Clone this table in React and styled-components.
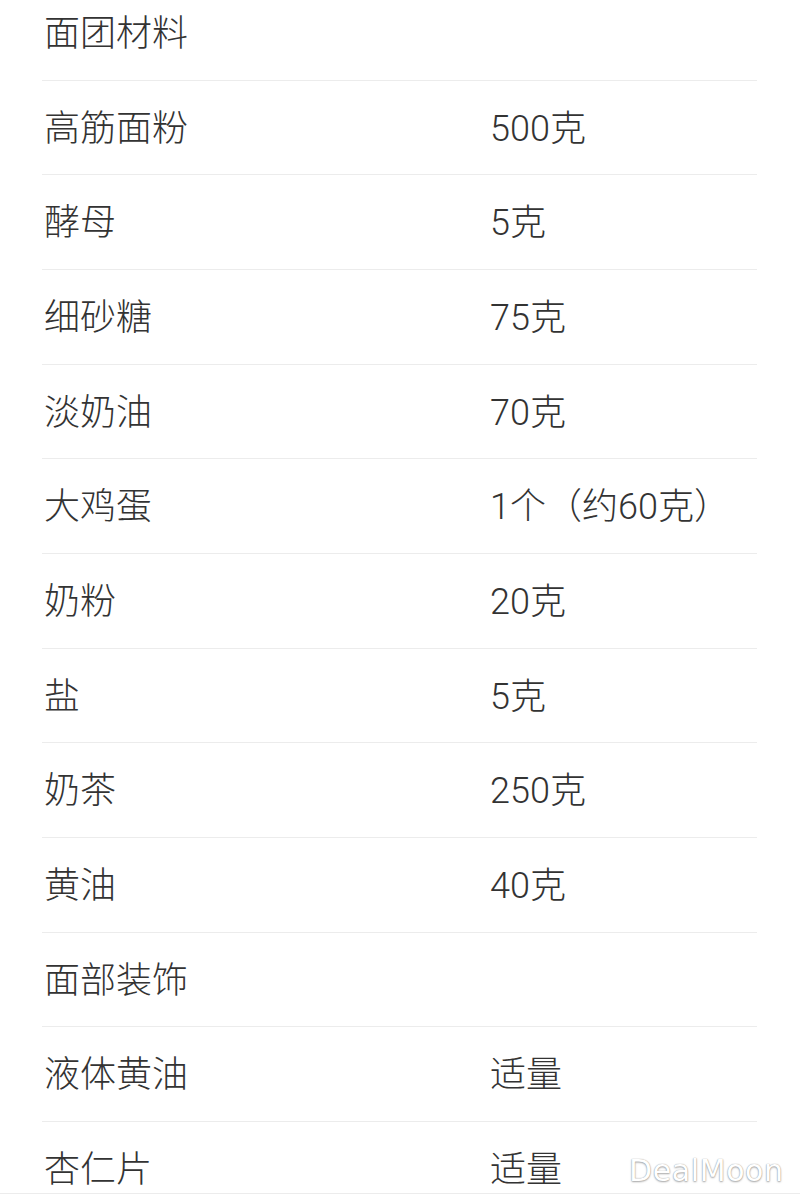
import React from "react"
import styled, { createGlobalStyle } from "styled-components"

const Global = createGlobalStyle`
  html, body {
    margin: 0;
    padding: 0;
    background: #ffffff;
    overflow: hidden;
  }
`

const Page = styled.div`
  position: relative;
  width: 800px;
  height: 1199px;
  overflow: hidden;
  background: #fff;
`

const Table = styled.div`
  margin: -14px 43px 0 42px;
  font-family: Roboto, "Noto Sans CJK SC", sans-serif;
  color: #333333;
`

const Row = styled.div`
  display: grid;
  grid-template-columns: 448px 1fr;
  align-items: center;
  box-sizing: border-box;
  height: 94.68px;
  border-bottom: 1px solid #ececec;
`

const Cell = styled.div`
  font-size: 36px;
  font-weight: 300;
  line-height: 1;
  padding-top: 2px;
  padding-left: ${p => (p.$left ? "2px" : "0")};
  white-space: nowrap;
`

const BottomEdge = styled.div`
  position: absolute;
  left: 0;
  right: 0;
  top: 1193px;
  height: 6px;
  border-top: 1px solid #ececec;
  background: #fff;
`

const Watermark = styled.div`
  position: absolute;
  left: 629px;
  top: 1156px;
  font-family: "DejaVu Sans", "Liberation Sans", sans-serif;
  font-size: 30px;
  line-height: 1;
  letter-spacing: 0.6px;
  color: #ffffff;
  text-shadow: 0 0 1px #8f8f8f, 0 1px 2px rgba(0, 0, 0, 0.35);
`

const rows = [
  ["面团材料", ""],
  ["高筋面粉", "500克"],
  ["酵母", "5克"],
  ["细砂糖", "75克"],
  ["淡奶油", "70克"],
  ["大鸡蛋", "1个（约60克）"],
  ["奶粉", "20克"],
  ["盐", "5克"],
  ["奶茶", "250克"],
  ["黄油", "40克"],
  ["面部装饰", ""],
  ["液体黄油", "适量"],
  ["杏仁片", "适量"],
]

const App = () => {
  return (
    <Page>
      <Global />
      <Table>
        {rows.map(([name, amount]) => (
          <Row key={name}>
            <Cell $left>{name}</Cell>
            <Cell>{amount}</Cell>
          </Row>
        ))}
      </Table>
      <BottomEdge />
      <Watermark>DealMoon</Watermark>
    </Page>
  )
}

export default App
